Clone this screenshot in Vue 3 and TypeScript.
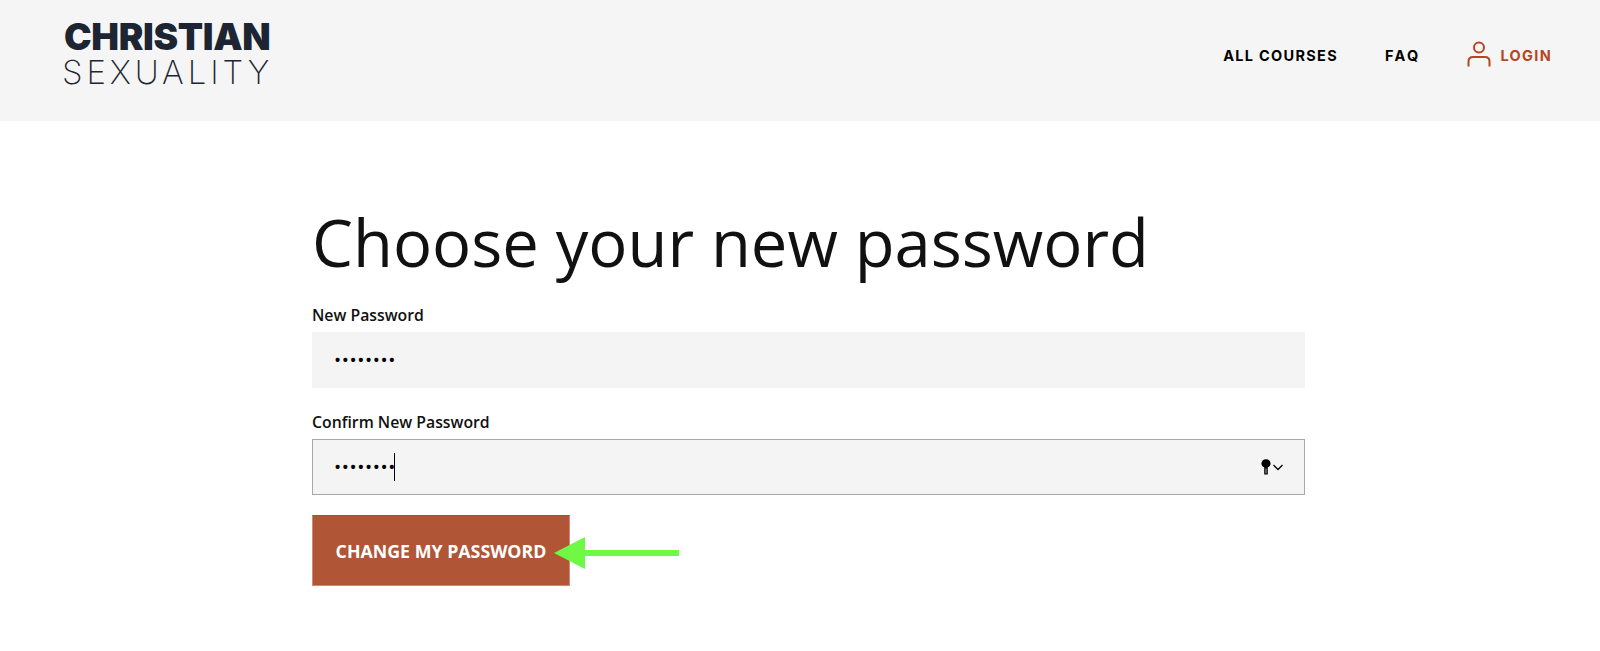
<script setup lang="ts">
const navLinks = ['All Courses', 'FAQ']
const passwordValue = 'password'
</script>

<template>
  <div class="page">
    <header class="site-header">
      <a class="logo" href="#">
        <span class="logo-top">CHRISTIAN</span>
        <span class="logo-bottom">SEXUALITY</span>
      </a>
      <nav class="nav">
        <a v-for="link in navLinks" :key="link" class="nav-link" href="#">{{ link }}</a>
        <a class="nav-link login" href="#">
          <svg class="user-icon" width="24" height="26" viewBox="0 0 24 26" fill="none">
            <circle cx="12" cy="6.5" r="5" stroke="currentColor" stroke-width="2" />
            <path d="M1.5 25.5V20.5C1.5 17.8 3.4 16 6 16H18C20.6 16 22.5 17.8 22.5 20.5V25.5" stroke="currentColor" stroke-width="2" />
          </svg>
          Login
        </a>
      </nav>
    </header>

    <main class="content">
      <h1>Choose your new password</h1>
      <form class="form" @submit.prevent>
        <label class="field">
          <span class="field-label">New Password</span>
          <span class="input-wrap">
            <input class="input" type="password" :value="passwordValue" readonly />
          </span>
        </label>
        <label class="field">
          <span class="field-label">Confirm New Password</span>
          <span class="input-wrap focused">
            <input class="input" type="password" :value="passwordValue" readonly />
            <i class="caret"></i>
            <svg class="key-icon" width="24" height="16" viewBox="0 0 24 16">
              <path d="M5 0.2C7.8 0.2 9.6 2.2 9.6 4.5C9.6 6.4 8.4 7.8 6.8 8.3V15.5H3.2V8.3C1.6 7.8 0.4 6.4 0.4 4.5C0.4 2.2 2.2 0.2 5 0.2Z" fill="#000" />
              <path d="M5 9.5V14.5" stroke="#f4f4f4" stroke-width="0.7" />
              <path d="M12.5 6L17 10.5L21.5 6" fill="none" stroke="#000" stroke-width="1.3" />
            </svg>
          </span>
        </label>
        <div class="actions">
          <button class="submit" type="submit">Change my password</button>
          <svg class="arrow" width="126" height="32" viewBox="0 0 126 32">
            <path d="M0 16L31 0V13H125V19H31V32Z" fill="#6ff945" />
          </svg>
        </div>
      </form>
    </main>
  </div>
</template>

<style scoped>
.page {
  height: 651px;
  overflow: hidden;
  background: #fff;
  font-family: "Open Sans", sans-serif;
}

.site-header {
  height: 121px;
  box-sizing: border-box;
  padding: 0 48px 10px 64px;
  background: #f5f5f5;
  display: flex;
  justify-content: space-between;
  align-items: center;
}

.logo {
  display: flex;
  flex-direction: column;
  gap: 1px;
  margin-top: -2px;
  color: #1e2532;
  text-decoration: none;
  font-family: Inter, sans-serif;
}

.logo-top {
  font-size: 37px;
  line-height: 34px;
  font-weight: 900;
  letter-spacing: -0.35px;
}

.logo-bottom {
  margin-left: -2px;
  font-size: 33px;
  line-height: 34px;
  font-weight: 200;
  letter-spacing: 3.9px;
}

.nav {
  display: flex;
  align-items: center;
  gap: 47px;
}

.nav-link {
  color: #000;
  text-decoration: none;
  text-transform: uppercase;
  font-family: Inter, sans-serif;
  font-size: 14.5px;
  font-weight: 700;
  letter-spacing: 1.3px;
}

.nav-link:nth-child(2) {
  letter-spacing: 2.3px;
}

.login {
  display: flex;
  align-items: center;
  gap: 10px;
  margin-left: -1px;
  color: #b5461f;
}

.user-icon {
  margin-top: -3px;
}

.content {
  width: 993px;
  margin-left: 312px;
  padding-top: 75px;
}

h1 {
  margin: 0 0 17px;
  font-size: 65.1px;
  line-height: 92px;
  font-weight: 400;
  color: #111;
}

.form {
  display: flex;
  flex-direction: column;
}

.field {
  display: block;
  margin-bottom: 20px;
}

.field:first-child {
  margin-bottom: 24px;
}

.field-label {
  display: block;
  font-size: 15.8px;
  line-height: 20px;
  font-weight: 600;
  color: #111;
  margin-bottom: 7px;
}

.input-wrap {
  position: relative;
  display: block;
  height: 56px;
  box-sizing: border-box;
  background: #f4f4f4;
  border: 1px solid transparent;
}

.input-wrap.focused {
  border-color: #a8a8a8;
}

.input {
  width: 100%;
  height: 100%;
  box-sizing: border-box;
  padding: 0 21px;
  border: 0;
  outline: 0;
  background: transparent;
  font-family: "Open Sans", sans-serif;
  font-size: 19px;
  letter-spacing: 0.6px;
  color: #000;
}

.caret {
  position: absolute;
  left: 81px;
  top: 13px;
  width: 1px;
  height: 28px;
  background: #000;
}

.key-icon {
  position: absolute;
  right: 19px;
  top: 19px;
}

.actions {
  position: relative;
  display: flex;
}

.submit {
  width: 258px;
  height: 71px;
  border: 1px solid #cf8a75;
  border-top-color: #bb4a1f;
  background: #b05536;
  color: #fff;
  font-family: "Open Sans", sans-serif;
  font-size: 17.8px;
  font-weight: 700;
  text-transform: uppercase;
  padding: 0;
}

.arrow {
  position: absolute;
  left: 242px;
  top: 22px;
}
</style>

<style>
html,
body {
  margin: 0;
  background: #fff;
}
</style>
